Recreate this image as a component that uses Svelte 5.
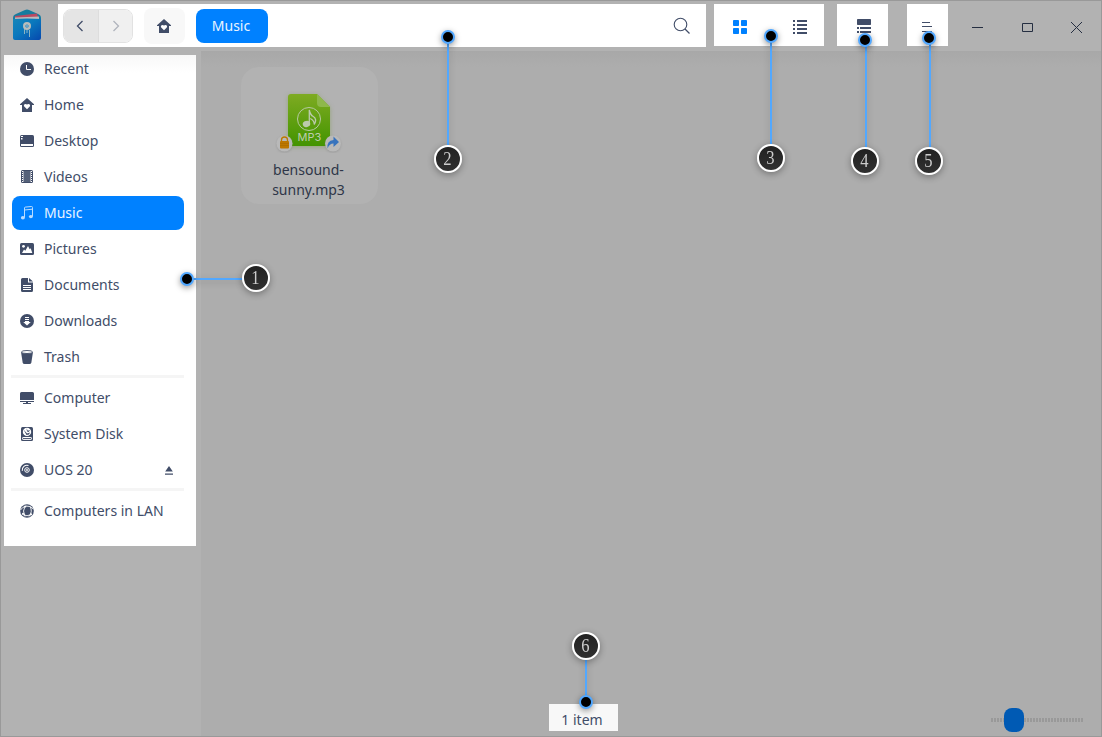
<script>
  const groups = [
    [
      ['recent', 'Recent'], ['home', 'Home'], ['desktop', 'Desktop'], ['videos', 'Videos'],
      ['music', 'Music'], ['pictures', 'Pictures'], ['documents', 'Documents'],
      ['downloads', 'Downloads'], ['trash', 'Trash']
    ],
    [['computer', 'Computer'], ['disk', 'System Disk'], ['disc', 'UOS 20']],
    [['lan', 'Computers in LAN']]
  ];
  // Each callout joins a dot on the interface to a numbered badge.
  const callouts = [
    { n: 1, dot: [187, 279], badge: [256, 278], line: [193, 278, 51, 2] },
    { n: 2, dot: [448, 37], badge: [448, 159], line: [447, 42, 2, 105] },
    { n: 3, dot: [771, 36], badge: [771, 158], line: [770, 41, 2, 105] },
    { n: 4, dot: [865, 40], badge: [865, 161], line: [865, 45, 2, 105] },
    { n: 5, dot: [929, 38], badge: [929, 161], line: [929, 43, 2, 106] },
    { n: 6, dot: [586, 702], badge: [586, 646], line: [585, 658, 2, 40] }
  ];
</script>

{#snippet icon(name)}
  <svg class="icon" width="14" height="14" viewBox="0 0 14 14" fill="currentColor">
    {#if name === 'recent'}
      <circle cx="7" cy="7" r="7" /><path d="M6.5 3v4.5H11" fill="none" stroke="#fff" />
    {:else if name === 'home'}
      <path d="M7 0l7 6.2v.8h-2v7H2V7H0v-.8z" />
      <path d="M7 11.2L4.2 8.4C3 6.8 5.3 4.9 7 6.6c1.7-1.7 4 .2 2.8 1.8z" fill="#fff" />
    {:else if name === 'desktop'}
      <rect y="1" width="14" height="12" rx="1.5" /><path d="M1 10h12v2H1zM1 2h2v1H1zM1 4h1.500v1.500H1z" fill="#fff" />
    {:else if name === 'videos'}
      <rect x="1" y="0" width="12" height="13" rx="1.500" />
      <path d="M4 1h6v11H4z" fill="#56627a" />
      <path d="M2 1h1v1H2zM2 3h1v1H2zM2 5h1v1H2zM2 7h1v1H2zM2 9h1v1H2zM2 11h1v1H2zM11 1h1v1h-1zM11 3h1v1h-1zM11 5h1v1h-1zM11 7h1v1h-1zM11 9h1v1h-1zM11 11h1v1h-1z" fill="#fff" />
      <path d="M3.500 1v11M10.500 1v11" stroke="#fff" stroke-width=".7" opacity=".7" />
    {:else if name === 'music'}
      <path d="M4.500 11.500V2q0-.8.800-.9l6-.6q1.200-.1 1.200.9v9M4.500 4l8-.8" fill="none" stroke="currentColor" />
      <ellipse cx="2.900" cy="11.800" rx="2" ry="1.700" /><ellipse cx="10.900" cy="10.600" rx="2" ry="1.700" />
    {:else if name === 'pictures'}
      <rect y="1" width="14" height="12" rx="1.500" /><circle cx="3.500" cy="4.300" r="1.400" fill="#fff" />
      <path d="M2 11l2-3.500 1.300 1.200L8 4l1.700 3.200 1-.9L12.300 11z" fill="#fff" />
    {:else if name === 'documents'}
      <path d="M2.500 0H8v4.500h5V12.500q0 1.500-1.500 1.500h-9Q1 14 1 12.500v-11Q1 0 2.500 0zM9 0l4 3.500H9z" />
      <path d="M3 7.500h8M3 9.500h8M3 11.500h8" stroke="#fff" />
    {:else if name === 'downloads'}
      <circle cx="7" cy="7" r="7" /><path d="M5 3h4v1H5zM5 5h4v1H5zM5 7h4v1h1.800L7 11.600 3.200 8H5z" fill="#fff" />
    {:else if name === 'trash'}
      <path d="M1 2l1.700 10.800Q3 14 4.500 14h5q1.500 0 1.800-1.200L13 2z" />
      <ellipse cx="7" cy="2" rx="5.500" ry="1.500" fill="#fff" stroke="currentColor" stroke-width=".9" />
    {:else if name === 'computer'}
      <path d="M1.500 1h11Q14 1 14 2.500V9H0V2.500Q0 1 1.500 1zM0 10h14v1H0zM6 11h2v1h3v1H3v-1h3z" />
    {:else if name === 'disk'}
      <rect x="1" width="12" height="14" rx="1.500" /><circle cx="7" cy="4.900" r="4.200" fill="#fff" />
      <path d="M3.500 2.500l3.500 4 3-1-1 2-2.500.5zM6.500 1.200l1.300 2.500L10 3 8.700 5 7 4.500z" />
      <rect x="2.500" y="10.500" width="9" height="1.900" rx=".6" fill="none" stroke="#fff" />
    {:else if name === 'disc'}
      <circle cx="7" cy="7" r="7" />
      <g fill="none" stroke="#fff"><circle cx="7" cy="7" r="2.300" stroke-width="1" /><path d="M2.300 7.800A4.700 4.700 0 0 1 8.500 2.600" stroke-width="1.100" /></g>
      <circle cx="7" cy="7" r=".9" fill="#fff" />
    {:else if name === 'lan'}
      <circle cx="7" cy="7" r="6.800" />
      <g fill="none" stroke="#fff" stroke-width=".9"><path d="M5 2.500Q2 6.500 5 12.500M10 2.500q3 5-1 10M.5 6Q2.500 3 5 2.500M2.500 10.500q4.500 2.500 9 0M6 2q4-.5 7.500 3" /></g>
      <circle cx="5.300" cy="2.500" r="1.100" fill="#fff" /><circle cx="11" cy="10.300" r="1.100" fill="#fff" /><circle cx="3" cy="9.700" r="1" fill="#fff" />
    {/if}
  </svg>
{/snippet}

<div class="window">
  <header>
    <svg class="logo" width="30" height="34" viewBox="0 0 30 34">
      <defs><linearGradient id="blue" x2="1" y2="1"><stop stop-color="#1686b9" /><stop offset=".45" stop-color="#0a78bd" /><stop offset="1" stop-color="#0648ae" /></linearGradient></defs>
      <path d="M1 10Q1 7 4 6l9-4q2-1 4 0l9 4q3 1 3 4v15H1z" fill="#177c9f" />
      <path d="M3 8l22-2.500 2 7.500H3z" fill="#b94961" /><path d="M3 9.500l24-1V13H3z" fill="#bbb" />
      <path d="M1 11q14-1 28 0v19q0 2-2 2H3q-2 0-2-2z" fill="url(#blue)" />
      <circle cx="15" cy="18" r="2.800" fill="none" stroke="#b9bdbb" stroke-width="2.400" /><circle cx="15" cy="18" r=".8" fill="#ddd" />
      <path d="M12.500 21v5M15 22v3M17.500 22v7" stroke="#8bb4c3" />
    </svg>
    <div class="panel address">
      <div class="history">
        <button aria-label="Back"><svg width="8" height="12" viewBox="0 0 8 12"><path d="M6.500 1L1.500 6l5 5" fill="none" stroke="#414d68" stroke-width="1.300" /></svg></button>
        <button aria-label="Forward"><svg width="8" height="12" viewBox="0 0 8 12"><path d="M1.500 1l5 5-5 5" fill="none" stroke="#b0b4bd" stroke-width="1.300" /></svg></button>
      </div>
      <button class="go-home" aria-label="Home">{@render icon('home')}</button>
      <button class="crumb">Music</button>
      <svg class="search" width="18" height="18" viewBox="0 0 18 18" fill="none" stroke="#414d68" stroke-width="1.100"><circle cx="7.500" cy="7.500" r="6.300" /><path d="M12 12l4.500 4.500" stroke-width="1.300" /></svg>
    </div>
    <div class="panel views">
      <svg width="14" height="14" viewBox="0 0 14 14" fill="#0081ff"><rect width="6" height="6" rx=".8" /><rect x="8" width="6" height="6" rx=".8" /><rect y="8" width="6" height="6" rx=".8" /><rect x="8" y="8" width="6" height="6" rx=".8" /></svg>
      <svg width="14" height="14" viewBox="0 0 14 14" fill="#414d68"><path d="M0 0h2v2H0zM4 0h10v2H4zM0 4h2v2H0zM4 4h10v2H4zM0 8h2v2H0zM4 8h10v2H4zM0 12h2v2H0zM4 12h10v2H4z" /></svg>
    </div>
    <div class="panel details">
      <svg width="14" height="14" viewBox="0 0 14 14" fill="#414d68"><rect width="14" height="6" rx=".7" /><path d="M0 8h2v2H0zM3 8h11v2H3zM0 12h2v2H0zM3 12h11v2H3z" /></svg>
    </div>
    <div class="panel menu">
      <svg width="10" height="10" viewBox="0 0 10 10" fill="#414d68"><path d="M0 0h8v1H0zM0 4h10v1H0zM0 9h10v1H0z" /></svg>
    </div>
    <div class="controls">
      <svg width="11" height="11" viewBox="0 0 11 11"><path d="M0 5.500h11" /></svg>
      <svg width="11" height="11" viewBox="0 0 11 11"><path d="M.5 1.500h10v8H.5z" /></svg>
      <svg width="11" height="11" viewBox="0 0 11 11"><path d="M0 0l11 11M11 0L0 11" /></svg>
    </div>
  </header>

  <div class="body">
    <aside>
      <nav>
        {#each groups as group, i}
          {#if i}<hr />{/if}
          {#each group as [name, label]}
            <div class="place" class:active={name === 'music'}>
              {@render icon(name)}<span>{label}</span>
              {#if name === 'disc'}
                <svg class="eject" width="8" height="9" viewBox="0 0 8 9" fill="#414d68"><path d="M4 0l3.800 5.500H.2zM0 7.500h8v1.200H0z" /></svg>
              {/if}
            </div>
          {/each}
        {/each}
      </nav>
    </aside>
    <main>
      <div class="file">
        <svg width="68" height="62" viewBox="0 0 68 62">
          <defs><linearGradient id="green" x2="0" y2="1"><stop stop-color="#7eab22" /><stop offset="1" stop-color="#439400" /></linearGradient></defs>
          <path d="M16 3h26l13 13v36q0 3-3 3H16q-3 0-3-3V6q0-3 3-3z" fill="url(#green)" class="sheet" />
          <path d="M42 3l13 13h-9q-4 0-4-4z" fill="#8eb84b" />
          <circle cx="34" cy="28" r="11.500" fill="none" stroke="#b7c9a3" />
          <ellipse cx="31.500" cy="33" rx="3.800" ry="3" transform="rotate(-15 31.500 33)" fill="#bccaad" />
          <path d="M34.300 33V19q1 5 4 6.500 4 2.500 1 8 0-4-4-6" fill="none" stroke="#bccaad" stroke-width="1.300" />
          <text x="34.500" y="50" text-anchor="middle" class="type">MP3</text>
          <g class="emblem"><circle cx="9.500" cy="52.500" r="8" /><circle cx="58" cy="52.500" r="8" /></g>
          <path d="M6.500 51v-2q0-3 3-3t3 3v2" fill="none" stroke="#bb7900" stroke-width="1.300" /><rect x="5" y="50" width="9" height="7.500" rx="1" fill="#bd7700" /><path d="M5 52.500h9M5 54.500h9" stroke="#a86900" stroke-width=".6" />
          <path d="M52.500 57.500q-1-8 6-8.500v-3.500l5.500 5.500-5.500 5v-3.500q-4 0-6 5z" fill="#3773bd" />
        </svg>
        <div class="name">bensound-<br />sunny.mp3</div>
      </div>
      <footer>
        <div class="count">1 item</div>
        <div class="zoom"><span class="thumb"></span></div>
      </footer>
    </main>
  </div>

  {#each callouts as c}
    <div class="line" style="left:{c.line[0]}px;top:{c.line[1]}px;width:{c.line[2]}px;height:{c.line[3]}px"></div>
    <div class="dot" style="left:{c.dot[0]}px;top:{c.dot[1]}px"></div>
    <div class="badge" style="left:{c.badge[0]}px;top:{c.badge[1]}px"><span>{c.n}</span></div>
  {/each}
</div>

<style>
  .window, .window * { box-sizing: border-box; }
  .window { position: relative; width: 1102px; height: 737px; overflow: hidden; display: flex; flex-direction: column; background: #adadad; border: 1px solid #999; font: 14px/20px "Noto Sans", sans-serif; color: #414d68; }
  svg { display: block; flex: none; }
  button { font: inherit; border: 0; padding: 0; display: flex; align-items: center; justify-content: center; }
  header { height: 50px; flex: none; display: flex; align-items: flex-start; background: #b2b2b2; padding-top: 3px; }
  .logo { margin: 4px 16px 0 11px; }
  .panel { background: #fff; height: 42px; flex: none; display: flex; }
  .address { width: 648px; height: 43px; padding: 0 15px 0 5px; align-items: center; }
  .history { display: flex; width: 70px; height: 34px; margin-top: 1px; border: 1px solid #e2e2e2; border-radius: 8px; overflow: hidden; }
  .history button { width: 34px; padding-right: 2px; background: #e5e5e5; }
  .history button + button { flex: 1; padding: 0 0 0 1px; background: #f0f0f0; border-left: 1px solid #ddd; }
  .go-home { margin: 1px 0 0 11px; width: 41px; height: 36px; padding-right: 1px; border-radius: 8px; background: #f8f8f8; color: #414d68; }
  .crumb { margin: 1px 0 0 11px; width: 72px; height: 34px; padding-right: 2px; border-radius: 8px; background: #0081ff; color: #e9f4ff; }
  .search { margin: 1px 0 0 auto; }
  .views { margin-left: 8px; width: 110px; padding: 16px 17px 0 19px; justify-content: space-between; }
  .details { margin-left: 13px; width: 51px; padding: 15px 0 0 20px; }
  .menu { margin-left: 19px; width: 41px; padding: 18px 0 0 15px; }
  .controls { display: flex; align-items: center; gap: 39px; margin: 17px 0 0 24px; height: 12px; fill: none; stroke: #252e41; }
  .controls svg:last-child { margin-left: -1px; }
  .body { flex: 1; display: flex; min-height: 0; }
  aside { width: 200px; background: #b2b2b2; padding: 4px 0 0 3px; }
  nav { width: 192px; height: 491px; background: linear-gradient(#f8f8f8, #fff 18px); padding: 0 12px 0 8px; display: flex; flex-direction: column; overflow: hidden; }
  .place { height: 34px; flex: none; margin-bottom: 2px; padding: 0 11px 0 8px; display: flex; align-items: center; border-radius: 8px; }
  .place:first-child { margin-top: -3px; }
  .place span { margin-left: 10px; }
  .active { background: #0081ff; color: #e9f4ff; }
  .active .icon { color: #b9dcff; }
  .eject { margin-left: auto; }
  hr { width: 173px; height: 3px; flex: none; border: 0; margin: -1px 0 3px -1px; background: #f5f5f5; }
  main { flex: 1; display: flex; flex-direction: column; padding: 16px 18px 4px 40px; background: linear-gradient(#a8a8a8, #adadad 16px); }
  .file { width: 137px; height: 137px; border-radius: 18px; background: #b2b2b2; padding: 24px 2px 0 0; display: flex; flex-direction: column; align-items: center; color: #2e3648; }
  .file svg { margin-left: 1px; }
  .sheet { filter: drop-shadow(0 1px 2px #78993e80); }
  .type { font: 11px Inter, sans-serif; fill: #bdcdad; }
  .emblem { fill: #b9b9b9; filter: drop-shadow(0 1px 1px #7776); }
  .name { text-align: center; margin-top: 7px; }
  footer { margin-top: auto; display: flex; align-items: center; padding-left: 308px; }
  .count { width: 69px; height: 27px; background: #f8f8f8; text-align: center; line-height: 31px; padding-right: 3px; }
  .zoom { margin: 5px 0 0 auto; width: 92px; height: 24px; padding-left: 13px; background: repeating-linear-gradient(90deg, #999 0 2px, #adadad 2px 3px) 0 10px / 92px 4px no-repeat; }
  .thumb { display: block; width: 20px; height: 24px; border-radius: 8px; background: #005ab4; }
  .line, .dot, .badge { position: absolute; translate: -1px -1px; }
  .line { background: #52a8ff; box-shadow: 0 2px 7px #0003; }
  .dot { width: 14px; height: 14px; margin: -7px; border: 2px solid #52a8ff; border-radius: 50%; background: #000; box-shadow: 0 2px 6px #0006; }
  .badge { width: 28px; height: 28px; margin: -14px; border: 2px solid #fff; border-radius: 50%; background: linear-gradient(#222, #303030); box-shadow: 0 2px 7px #0005; color: #ccc; font: 18px/24px "Liberation Serif", serif; text-align: center; padding-right: 1px; }
  .badge span { display: inline-block; transform: scaleX(.92); }
</style>
